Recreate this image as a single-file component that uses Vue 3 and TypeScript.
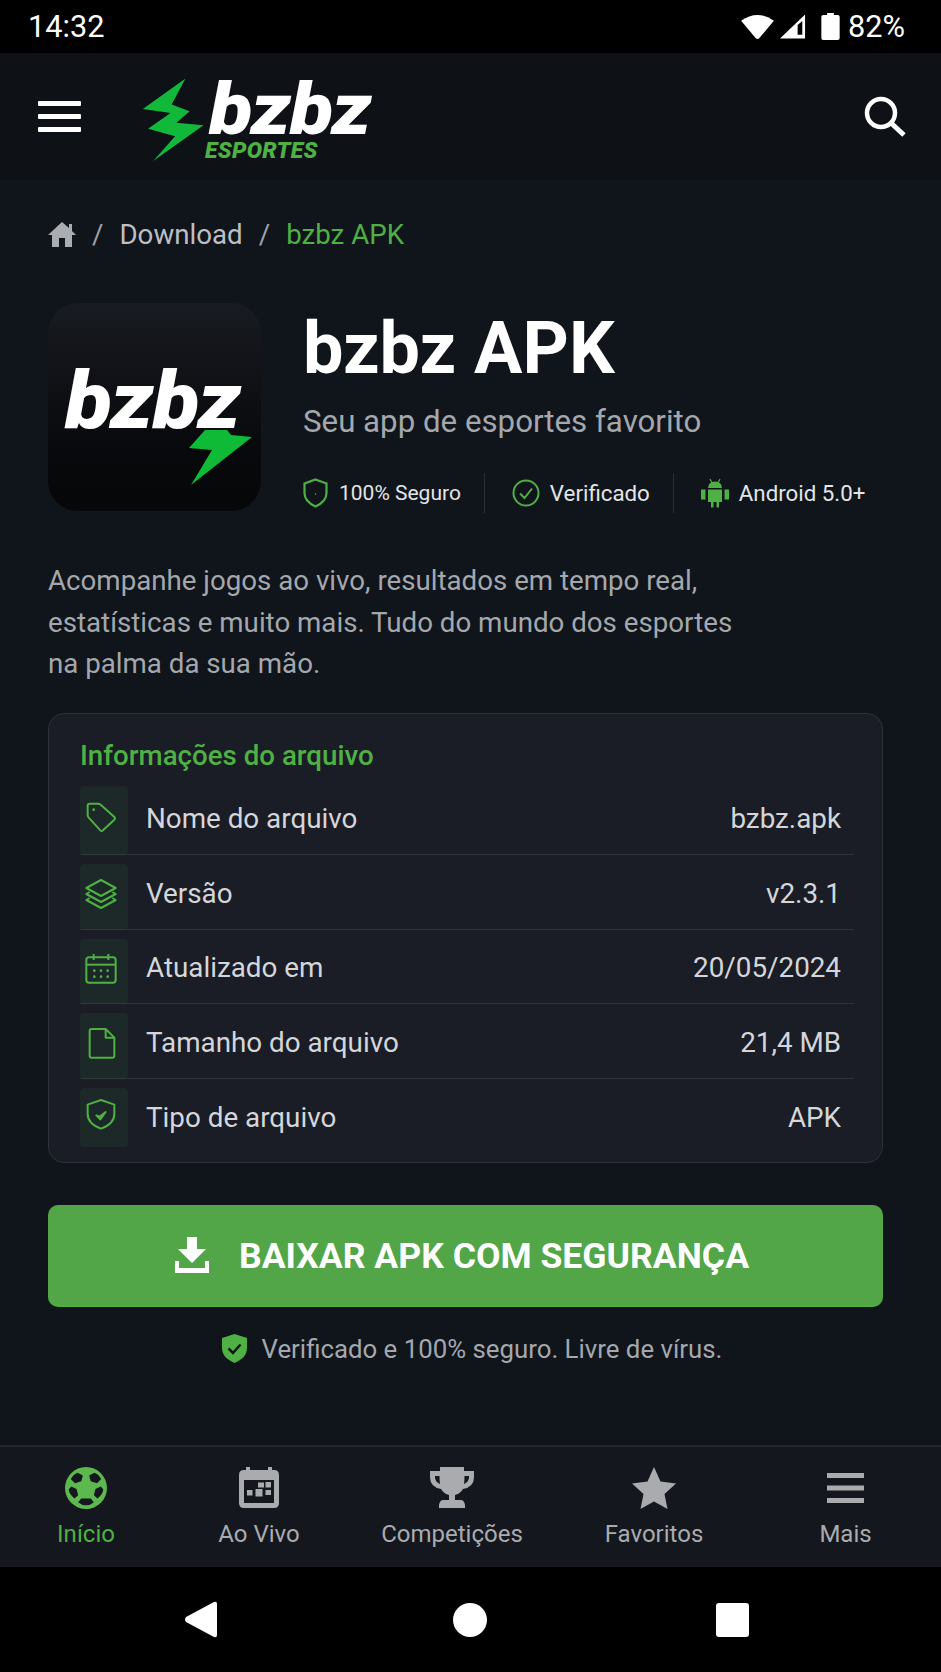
<script setup lang="ts">
interface InfoRow {
  label: string
  value: string
  paths: string[]
  dots?: number[][]
}

// Rows of the file info card
const infoRows: InfoRow[] = [
  {
    label: 'Nome do arquivo',
    value: 'bzbz.apk',
    paths: ['M2 3.5Q2 2 3.5 2H10Q11 2 12 3L22 12Q23 13 22 14L13.5 22Q12.5 23 11.5 22L2.8 12.5Q2 11.7 2 10.5Z'],
    dots: [[6.5, 6.5]]
  },
  {
    label: 'Versão',
    value: 'v2.3.1',
    paths: ['M12 1.5L23 7.5L12 13.5L1 7.5Z', 'M3.5 10.5L1 12L12 18L23 12L20.5 10.5', 'M3.5 15L1 16.5L12 22.5L23 16.5L20.5 15']
  },
  {
    label: 'Atualizado em',
    value: '20/05/2024',
    paths: ['M3 4H21Q23 4 23 6V21Q23 23 21 23H3Q1 23 1 21V6Q1 4 3 4Z', 'M1 9.5H23', 'M6.5 1.5V6', 'M17.5 1.5V6'],
    dots: [[7, 14], [12, 14], [17, 14], [7, 18.5], [12, 18.5], [17, 18.5]]
  },
  {
    label: 'Tamanho do arquivo',
    value: '21,4 MB',
    paths: ['M5 1.5H15.5L22 8V21.5Q22 23 20.5 23H5Q3.5 23 3.5 21.5V3Q3.5 1.5 5 1.5Z', 'M15.5 1.5V8H22']
  },
  {
    label: 'Tipo de arquivo',
    value: 'APK',
    paths: ['M12 1.5L22 5V12C22 17.5 17.5 21 12 23C6.5 21 2 17.5 2 12V5Z', 'M8.5 13L11 14L15.5 10.5L11.5 16Z']
  }
]

// Bottom navigation; every icon is one even-odd filled path
const navItems = [
  {
    label: 'Início',
    active: true,
    width: 42,
    box: '0 0 40 40',
    d: 'M20 0A20 20 0 1 0 20 40A20 20 0 1 0 20 0ZM12 5.500L17 8L15.500 13.500L9.500 15.500L5.500 11.500Q8 7 12 5.500ZM28 5.500Q32 7 34.500 11.500L30.500 15.500L24.500 13.500L23 8ZM6 18.500L11 21L12.500 27L9 30Q4 26 3.500 21.500ZM34 18.500L36.500 21.500Q36 26 31 30L27.500 27L29 21ZM15.500 30H24.500L27.500 33.500Q24 36.500 20 36.500Q16 36.500 12.500 33.500Z'
  },
  {
    label: 'Ao Vivo',
    active: false,
    width: 40,
    box: '0 0 40 42',
    d: 'M7 0H11V3H29V0H33V3H35Q40 3 40 8V36Q40 41 35 41H5Q0 41 0 36V8Q0 3 5 3H7ZM5 13V36H35V13ZM19 15.500H25V20.500H19ZM26.500 15H32V20.500H26.500ZM8 23H13.500V28.500H8ZM16.500 22H23.500V29.500H16.500ZM26.500 23H32V28H26.500Z'
  },
  {
    label: 'Competições',
    active: false,
    width: 44,
    box: '0 0 44 42',
    d: 'M10 0H34V4H44V10Q44 20 33 22Q30 27 25 28V33H31Q34 33 35 38V41H9V38Q10 33 13 33H19V28Q14 27 11 22Q0 20 0 10V4H10ZM5 9V10Q5 15 10 17Q9.500 13 9.500 9ZM39 9H34.500Q34.500 13 34 17Q39 15 39 10Z'
  },
  {
    label: 'Favoritos',
    active: false,
    width: 44,
    box: '0 0 44 42',
    d: 'M22 0L28.500 14.500L44 16.500L32.500 27L35.500 42L22 34.500L8.500 42L11.500 27L0 16.500L15.500 14.500Z'
  },
  {
    label: 'Mais',
    active: false,
    width: 37,
    box: '0 -6 37 42',
    d: 'M0 0H37V5H0ZM0 12.500H37V17.500H0ZM0 25H37V30H0Z'
  }
]
</script>

<template>
  <div class="phone">
    <div class="status-bar">
      <span>14:32</span>
      <div class="status-right">
        <svg width="33" height="27" viewBox="0 0 34 28">
          <path d="M0 8Q17 -4 34 8L19 26Q17 28 15 26Z" fill="#fff" />
        </svg>
        <svg class="signal" width="26" height="27" viewBox="0 0 28 28">
          <path d="M0 27L27 1V27ZM19 12.500L19 23H24V8Z" fill="#fff" fill-rule="evenodd" />
        </svg>
        <svg class="battery" width="19" height="27" viewBox="0 0 19 28">
          <path d="M6 0H13V2H17Q19 2 19 4V26Q19 28 17 28H2Q0 28 0 26V4Q0 2 2 2H6Z" fill="#fff" />
        </svg>
        <span class="percent">82%</span>
      </div>
    </div>

    <header class="top-bar">
      <div class="burger"><i></i><i></i><i></i></div>
      <div class="brand">
        <svg class="brand-bolt" width="66" height="86" viewBox="20 26 184 248">
          <path d="M148 30L25 118L105 130L40 175L118 197L55 268L200 165L122 158L160 125L108 105Z" fill="#12b83a" />
        </svg>
        <div class="brand-text">
          <span class="brand-name">bzbz</span>
          <span class="brand-sub">ESPORTES</span>
        </div>
      </div>
      <svg width="42" height="42" viewBox="0 0 42 42" fill="none" stroke="#fff">
        <circle cx="17" cy="17" r="14" stroke-width="4.500" />
        <path d="M27 27L40 39" stroke-width="5" />
      </svg>
    </header>

    <main class="content">
      <nav class="crumbs">
        <svg width="28" height="25" viewBox="0 0 28 25">
          <path d="M14 0L21 6V2H24V9L28 13H24V25H17V16H11V25H4V13H0Z" fill="#a9adb2" />
        </svg>
        <span class="sep">/</span>
        <span>Download</span>
        <span class="sep">/</span>
        <span class="crumb-current">bzbz APK</span>
      </nav>

      <section class="hero">
        <div class="app-icon">
          <svg class="app-icon-bolt" width="64" height="56" viewBox="0 0 64 56">
            <path d="M16 0L0 18L23 20L2 55L63 7L42 5L38 0Z" fill="#0fbb36" />
          </svg>
          <span class="app-icon-name">bzbz</span>
        </div>
        <div class="hero-info">
          <h1>bzbz APK</h1>
          <p class="tagline">Seu app de esportes favorito</p>
          <div class="badges">
            <div class="badge">
              <svg width="25" height="30" viewBox="0 0 25 30" fill="none" stroke="#4fb044" stroke-width="2.200">
                <path d="M12.500 1.500L23.500 5.500V15C23.500 22 18 26 12.500 28.500C7 26 1.500 22 1.500 15V5.500Z" />
                <circle cx="12.500" cy="16" r="0.800" fill="#4fb044" stroke="none" />
              </svg>
              <span>100% Seguro</span>
            </div>
            <div class="badge">
              <svg width="28" height="28" viewBox="0 0 28 28" fill="none" stroke="#4fb044" stroke-width="2">
                <circle cx="14" cy="14" r="12.500" />
                <path d="M8 14.500L12.500 19L20 9.500" />
              </svg>
              <span>Verificado</span>
            </div>
            <div class="badge">
              <svg width="28" height="30" viewBox="0 0 28 30">
                <path d="M7 10H21Q20.500 3.500 14 3.500Q7.500 3.500 7 10ZM7 11.500H21V24H18V29.500H15.500V24H12.500V29.500H10V24H7ZM0 11.500H4.500V21.500H0ZM23.500 11.500H28V21.500H23.500Z" fill="#4fb044" />
                <path d="M9 1L11 5M19 1L17 5" stroke="#4fb044" stroke-width="1.200" />
              </svg>
              <span>Android 5.0+</span>
            </div>
          </div>
        </div>
      </section>

      <p class="description">
        Acompanhe jogos ao vivo, resultados em tempo real,<br />
        estatísticas e muito mais. Tudo do mundo dos esportes<br />
        na palma da sua mão.
      </p>

      <section class="info-card">
        <h2>Informações do arquivo</h2>
        <div v-for="row in infoRows" :key="row.label" class="info-row">
          <div class="info-icon">
            <svg width="32" height="32" viewBox="0 0 24 24" fill="none" stroke="#4fb044" stroke-width="1.500" stroke-linejoin="round">
              <path v-for="d in row.paths" :key="d" :d="d" />
              <circle v-for="dot in row.dots" :key="dot.join()" :cx="dot[0]" :cy="dot[1]" r="1" fill="#4fb044" stroke="none" />
            </svg>
          </div>
          <span class="info-label">{{ row.label }}</span>
          <span class="info-value">{{ row.value }}</span>
        </div>
      </section>

      <button class="download" type="button">
        <svg width="34" height="36" viewBox="0 0 34 36">
          <path d="M12 0H22V12H31L17 26L3 12H12ZM0 24H4V31H30V24H34V36H0Z" fill="#fff" />
        </svg>
        <span class="download-label">BAIXAR APK COM SEGURANÇA</span>
      </button>

      <div class="safe-note">
        <svg width="25" height="29" viewBox="0 0 25 29">
          <path d="M12.500 0L25 4V14C25 22 19 26 12.500 29C6 26 0 22 0 14V4Z" fill="#4fb044" />
          <path d="M6.500 14.500L11 19L18.500 10.500" fill="none" stroke="#10141b" stroke-width="2.500" />
        </svg>
        <span>Verificado e 100% seguro. Livre de vírus.</span>
      </div>
    </main>

    <nav class="bottom-nav">
      <div v-for="item in navItems" :key="item.label" class="nav-item" :class="{ active: item.active }">
        <svg :width="item.width" height="42" :viewBox="item.box">
          <path :d="item.d" fill-rule="evenodd" />
        </svg>
        <span>{{ item.label }}</span>
      </div>
    </nav>

    <div class="system-bar">
      <svg width="33" height="37" viewBox="0 0 33 37">
        <path d="M30 1Q33 0 33 3V34Q33 37 30 36L2 21Q0 18.500 2 16Z" fill="#fff" />
      </svg>
      <span class="sys-circle"></span>
      <span class="sys-square"></span>
    </div>
  </div>
</template>

<style>
html,
body {
  margin: 0;
  background: #000;
}
</style>

<style scoped>
.phone {
  width: 941px;
  height: 1672px;
  display: flex;
  flex-direction: column;
  background: #10141b;
  color: #fff;
  font-family: Roboto, "Liberation Sans", sans-serif;
  overflow: hidden;
}

.status-bar {
  height: 53px;
  flex: none;
  background: #000;
  display: flex;
  align-items: center;
  justify-content: space-between;
  padding: 0 36px 0 28px;
  font-size: 30.700px;
}

.status-right {
  display: flex;
  align-items: center;
}

.signal {
  margin-left: 6px;
}

.battery {
  margin-left: 15px;
}

.percent {
  margin-left: 8px;
}

.top-bar {
  height: 127px;
  flex: none;
  background: #0e1116;
  display: flex;
  align-items: center;
  padding: 0 35px 0 38px;
}

.burger {
  width: 43px;
  display: flex;
  flex-direction: column;
  gap: 8px;
}

.burger i {
  height: 5px;
  background: #fff;
  border-radius: 1px;
}

.brand {
  display: flex;
  align-items: flex-start;
  margin-left: 59px;
  margin-right: auto;
  margin-top: 12px;
}

.brand-bolt {
  margin-top: -4px;
}

.brand-text {
  display: flex;
  flex-direction: column;
  margin-left: 3px;
}

.brand-name {
  font-size: 72px;
  line-height: 57px;
  font-weight: 900;
  font-style: italic;
  letter-spacing: -1px;
  transform: scaleX(1.11);
  transform-origin: left center;
}

.brand-sub {
  margin-left: -4px;
  font-size: 22.900px;
  line-height: 26px;
  font-weight: 900;
  font-style: italic;
  color: #4fb044;
  letter-spacing: 0.3px;
}

.content {
  flex: 1;
  padding: 36px 58px 0 48px;
  min-height: 0;
}

.crumbs {
  display: flex;
  align-items: center;
  height: 37px;
  font-size: 27.700px;
  color: #bcbfc4;
}

.sep {
  margin: 0 16px;
  color: #9da1a6;
}

.crumb-current {
  color: #4fb044;
}

.hero {
  display: flex;
  align-items: flex-start;
  gap: 42px;
  margin-top: 50px;
}

.app-icon {
  width: 213px;
  height: 208px;
  flex: none;
  position: relative;
  border-radius: 30px;
  background: linear-gradient(#181b21, #08090c 70%, #060708);
}

.app-icon-name {
  position: absolute;
  left: 17px;
  top: 51px;
  font-size: 80px;
  line-height: 94px;
  font-weight: 900;
  font-style: italic;
  letter-spacing: -1px;
  transform: scaleX(1.08);
  transform-origin: left center;
}

.app-icon-bolt {
  position: absolute;
  left: 141px;
  top: 127px;
}

.hero-info {
  flex: 1;
  min-width: 0;
}

h1 {
  margin: 6px 0 0;
  font-size: 72px;
  line-height: 80px;
  font-weight: 700;
  white-space: nowrap;
}

.tagline {
  margin: 13px 0 0;
  font-size: 31.250px;
  line-height: 40px;
  color: #a4a8ad;
  white-space: nowrap;
}

.badges {
  display: flex;
  align-items: center;
  margin-top: 31px;
  height: 40px;
  font-size: 22.300px;
  color: #e4e5e7;
  white-space: nowrap;
}

.badge {
  display: flex;
  align-items: center;
  gap: 10px;
  height: 100%;
}

.badge:first-child {
  font-size: 21px;
  gap: 11px;
}

.badge + .badge {
  border-left: 1px solid #2a2e35;
  margin-left: 23px;
  padding-left: 27px;
}

.description {
  margin: 47px 0 0;
  font-size: 27.700px;
  line-height: 41.600px;
  color: #a4a8ad;
  white-space: nowrap;
}

.info-card {
  box-sizing: border-box;
  width: 835px;
  height: 450px;
  margin-top: 28px;
  padding: 22px 28px 0 31px;
  background: #1a1d26;
  border: 1px solid #2e3239;
  border-radius: 16px;
}

h2 {
  margin: 0 0 5px;
  font-size: 27.700px;
  line-height: 40px;
  font-weight: 500;
  color: #4fb044;
}

.info-row {
  box-sizing: border-box;
  height: 74.500px;
  display: flex;
  align-items: stretch;
  border-bottom: 1px solid #2e3239;
  font-size: 27.800px;
}

.info-row:last-child {
  border-bottom: none;
}

.info-icon {
  width: 48px;
  flex: none;
  display: flex;
  align-items: center;
  padding-left: 5px;
  box-sizing: border-box;
  background: rgba(79, 176, 68, 0.08);
  border-radius: 4px;
  margin-top: 9px;
  margin-bottom: -1px;
}

.info-row:first-of-type .info-icon {
  margin-top: 5px;
}

.info-row:last-child .info-icon {
  margin-bottom: 6px;
}

/* The glyph sits on the row's centre, not on the tinted box's centre */
.info-icon svg {
  margin-bottom: 7px;
  overflow: visible;
}

.info-label,
.info-value {
  display: flex;
  align-items: center;
  padding-top: 2px;
  color: #d4d6d9;
}

.info-label {
  margin-left: 18px;
}

.info-value {
  margin-left: auto;
  margin-right: 13px;
}

.download {
  width: 835px;
  height: 102px;
  margin-top: 42px;
  padding: 0 7px 0 0;
  display: flex;
  align-items: center;
  justify-content: center;
  gap: 30px;
  border: none;
  border-radius: 10px;
  background: #52a647;
  border-bottom: 2px solid #4caf3f;
  color: #fff;
  font-family: inherit;
  font-size: 35.600px;
  font-weight: 700;
}

.download-label {
  padding-top: 3px;
}

.safe-note {
  display: flex;
  align-items: center;
  justify-content: center;
  gap: 15px;
  width: 835px;
  box-sizing: border-box;
  padding-left: 13px;
  margin-top: 24px;
  height: 36px;
  font-size: 25.800px;
  color: #a4a8ad;
}

.bottom-nav {
  height: 122px;
  flex: none;
  display: grid;
  grid-template-columns: 172px 174px 212px 192px 191px;
  box-sizing: border-box;
  background: #14171d;
  border-top: 2px solid #23262c;
}

.nav-item {
  display: flex;
  flex-direction: column;
  align-items: center;
  padding-top: 20px;
  color: #a9abaf;
  fill: #a9abaf;
  font-size: 24px;
}

.nav-item span {
  margin-top: 11px;
}

.nav-item.active {
  color: #4fb044;
  fill: #5cb84f;
}

.system-bar {
  height: 105px;
  flex: none;
  background: #000;
  display: flex;
  align-items: center;
  padding-left: 184px;
}

.sys-circle {
  width: 34px;
  height: 34px;
  border-radius: 50%;
  background: #fff;
  margin-left: 236px;
}

.sys-square {
  width: 33px;
  height: 34px;
  border-radius: 3px;
  background: #fff;
  margin-left: 229px;
}
</style>
